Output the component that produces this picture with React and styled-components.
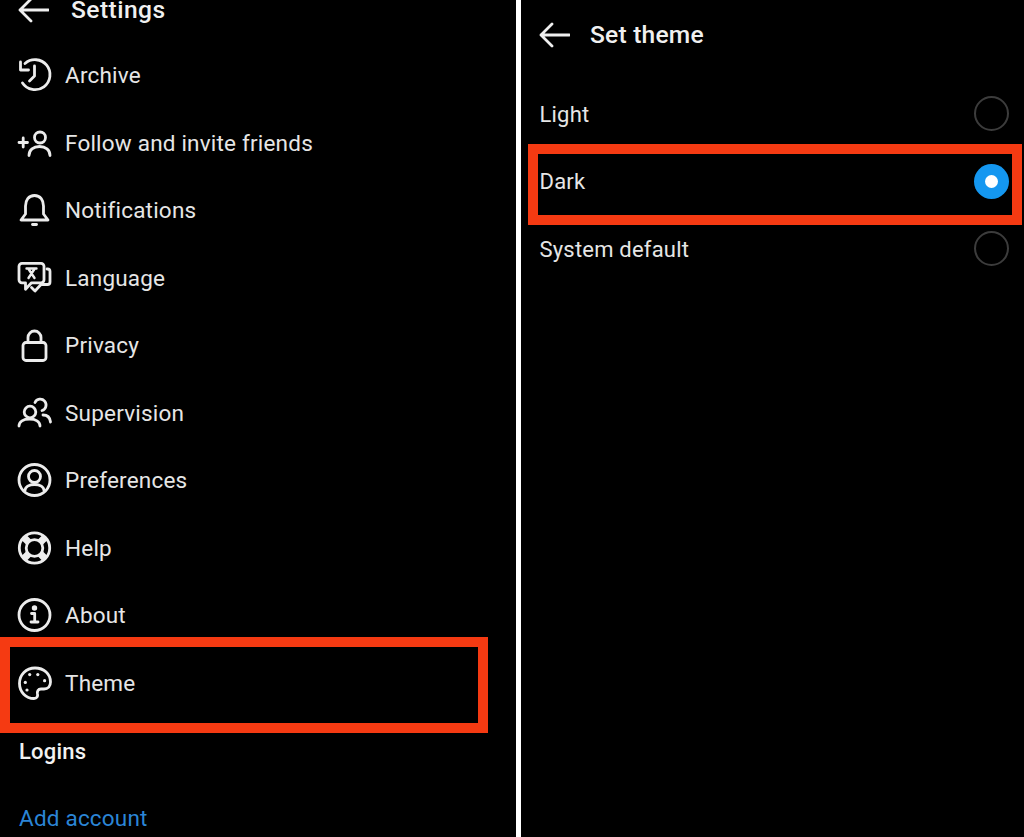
import React from "react";
import styled, { createGlobalStyle } from "styled-components";

const Global = createGlobalStyle`
  html, body { margin: 0; padding: 0; background: #000; }
  body { font-family: Roboto, "Liberation Sans", sans-serif; }
`;

const Page = styled.div`
  display: grid;
  grid-template-columns: 516px 5px 503px;
  width: 1024px;
  height: 837px;
  overflow: hidden;
  background: #000;
`;
const Panel = styled.section`
  position: relative;
  display: flex;
  flex-direction: column;
  min-width: 0;
`;
const Divider = styled.div`
  background: #fff;
`;
const Header = styled.header`
  display: flex;
  align-items: center;
  flex: none;
  box-sizing: border-box;
  height: ${(p) => p.$height}px;
  padding: 0 0 ${(p) => p.$bottom}px 18px;
  gap: ${(p) => p.$gap}px;
`;
const Title = styled.h1`
  margin: 0;
  font-size: 24.6px;
  line-height: 28px;
  font-weight: 500;
  letter-spacing: ${(p) => p.$track}px;
  color: #f0f0f0;
  white-space: nowrap;
`;
const Row = styled.div`
  display: flex;
  align-items: center;
  flex: none;
  height: 67.5px;
  box-sizing: border-box;
  padding: ${(p) => p.$top || 0}px 0 0 ${(p) => p.$inset}px;
  gap: 12px;
`;
const Label = styled.span`
  font-size: 22.5px;
  line-height: 28px;
  letter-spacing: 0.2px;
  color: #e6e6e6;
`;
const ThemeLabel = styled(Label)`
  font-size: 22px;
  padding-top: 2px;
`;
const Strong = styled(Label)`
  font-weight: 500;
  font-size: 22px;
  color: #f2f2f2;
`;
const LinkLabel = styled(Label)`
  color: #2b85d6;
`;
const Glyph = styled.svg`
  flex: none;
  width: 36px;
  height: 36px;
  fill: none;
  stroke: #ececec;
  stroke-width: 2.8;
  stroke-linecap: round;
  stroke-linejoin: round;
`;
const Arrow = styled.svg`
  flex: none;
  width: 31px;
  height: 28px;
  fill: none;
  stroke: #efefef;
  stroke-width: 2.8;
  stroke-linecap: round;
  stroke-linejoin: round;
`;
const ThemeRow = styled.div`
  display: flex;
  align-items: center;
  justify-content: space-between;
  height: 67.5px;
  flex: none;
  box-sizing: border-box;
  padding: 0 15.5px 0 18.5px;
`;
const Radio = styled.span`
  box-sizing: border-box;
  display: flex;
  align-items: center;
  justify-content: center;
  width: 35px;
  height: 35px;
  border-radius: 50%;
  border: ${(p) => (p.$on ? "none" : "2.5px solid #3c3c3c")};
  background: ${(p) => (p.$on ? "#1497f0" : "transparent")};
`;
const RadioDot = styled.span`
  width: 13px;
  height: 13px;
  border-radius: 50%;
  background: #fff;
`;
const Highlight = styled.div`
  position: absolute;
  box-sizing: border-box;
  left: ${(p) => p.$left}px;
  top: ${(p) => p.$top}px;
  width: ${(p) => p.$width}px;
  height: ${(p) => p.$height}px;
  border: 10px solid #f53a12;
  pointer-events: none;
`;

const Back = () => (
  <Arrow viewBox="0 0 31 28">
    <path d="M30.500 14H2M13 3 2 14l11 11" />
  </Arrow>
);

const icons = {
  archive: (
    <>
      <path d="M8 6.500A15 15 0 1 1 5.500 26" />
      <path d="M3.500 5v8h8" />
      <path d="M17.500 9v10l-5 5" />
    </>
  ),
  follow: (
    <>
      <path d="M2 17.500h8.500M6.200 13v9" />
      <circle cx="23" cy="12.500" r="5.500" />
      <path d="M12 30.500c0-5.500 4.500-9 10.500-9s10.500 3.500 10.500 9" />
    </>
  ),
  bell: (
    <>
      <path d="M17.500 3.500C11.500 3.500 8.500 8.500 8.500 14v8L4 28h27l-4.500-6v-8c0-5.500-3-10.500-9-10.500Z" />
      <path d="M15.500 32.500h4" />
    </>
  ),
  language: (
    <>
      <path d="M5 3.300h19a3 3 0 0 1 3 3v13.500a3 3 0 0 1-3 3H14.500l-6 6.500v-6.500H5a3 3 0 0 1-3-3V6.300a3 3 0 0 1 3-3Z" />
      <path d="M30 9h.5a2.500 2.500 0 0 1 2.500 2.500V22a2.500 2.500 0 0 1-2.500 2.500H24l-6 6.500-3.500-3.500" />
      <path d="M9.500 8.500h10M11.500 18l6-9M17.500 18l-6-9" strokeWidth="2.400" />
    </>
  ),
  lock: (
    <>
      <rect x="6" y="15.500" width="23" height="18" rx="3" />
      <path d="M11 15.500v-5a6.500 6.500 0 0 1 13 0v5" />
    </>
  ),
  supervision: (
    <>
      <circle cx="13" cy="17" r="5.800" />
      <path d="M2 31c0-4.500 4.500-7 10.500-7S23 26.500 23 31" />
      <path d="M18 7.500A5.800 5.800 0 1 1 25 15.500" />
      <path d="M26 20c4 0 7 2.500 7.500 7" />
    </>
  ),
  preferences: (
    <>
      <circle cx="17.500" cy="18" r="15.500" />
      <circle cx="17.500" cy="14.500" r="6" />
      <path d="M8 28.500c0-3.500 4-6 9.500-6s9.500 2.500 9.500 6" />
    </>
  ),
  help: (
    <>
      <circle cx="17.500" cy="18" r="15.200" />
      <circle cx="17.500" cy="18" r="8.300" />
      <path d="M7 7.500l5 5M28 7.500l-5 5M7 28.500l5-5M28 28.500l-5-5" strokeWidth="7" strokeLinecap="butt" />
    </>
  ),
  about: (
    <>
      <circle cx="17.500" cy="18" r="15.500" />
      <circle cx="17.500" cy="11" r="1.300" fill="#ececec" />
      <path d="M14.500 16.500h3.200v8M14 25h7" />
    </>
  ),
  theme: (
    <>
      <path d="M18 3C9 3 2.500 10 2.500 18.500S9 33.500 17 33.500c3 0 4-2.500 3.500-4.500-.5-2.500.5-5 3.500-5h3c4 0 6.500-3 6.500-7C33.500 9 27 3 18 3Z" />
      <g fill="#ececec" stroke="none">
        <circle cx="8.300" cy="17.400" r="1.600" />
        <circle cx="12.700" cy="9.600" r="1.600" />
        <circle cx="20.800" cy="9.600" r="1.600" />
        <circle cx="27.600" cy="15.700" r="1.600" />
        <circle cx="10" cy="25" r="1.600" />
      </g>
    </>
  ),
};

const menu = [
  ["archive", "Archive"],
  ["follow", "Follow and invite friends"],
  ["bell", "Notifications"],
  ["language", "Language"],
  ["lock", "Privacy"],
  ["supervision", "Supervision"],
  ["preferences", "Preferences"],
  ["help", "Help"],
  ["about", "About"],
  ["theme", "Theme"],
];

const themes = [
  ["Light", false],
  ["Dark", true],
  ["System default", false],
];

export default function App() {
  return (
    <Page>
      <Global />
      <Panel>
        <Header $height={41.25} $bottom={21.25} $gap={22}>
          <Back />
          <Title $track={0.45}>Settings</Title>
        </Header>
        {menu.map(([icon, label]) => (
          <Row key={label} $inset={17}>
            <Glyph viewBox="0 0 36 36">{icons[icon]}</Glyph>
            <Label>{label}</Label>
          </Row>
        ))}
        <Row $inset={19} $top={3}>
          <Strong>Logins</Strong>
        </Row>
        <Row $inset={19}>
          <LinkLabel>Add account</LinkLabel>
        </Row>
        <Highlight $left={0} $top={637} $width={488} $height={96} />
      </Panel>
      <Divider />
      <Panel>
        <Header $height={80} $bottom={10} $gap={20}>
          <Back />
          <Title $track={0.2}>Set theme</Title>
        </Header>
        {themes.map(([label, on]) => (
          <ThemeRow key={label}>
            <ThemeLabel>{label}</ThemeLabel>
            <Radio $on={on}>{on && <RadioDot />}</Radio>
          </ThemeRow>
        ))}
        <Highlight $left={7} $top={144} $width={494} $height={81} />
      </Panel>
    </Page>
  );
}
